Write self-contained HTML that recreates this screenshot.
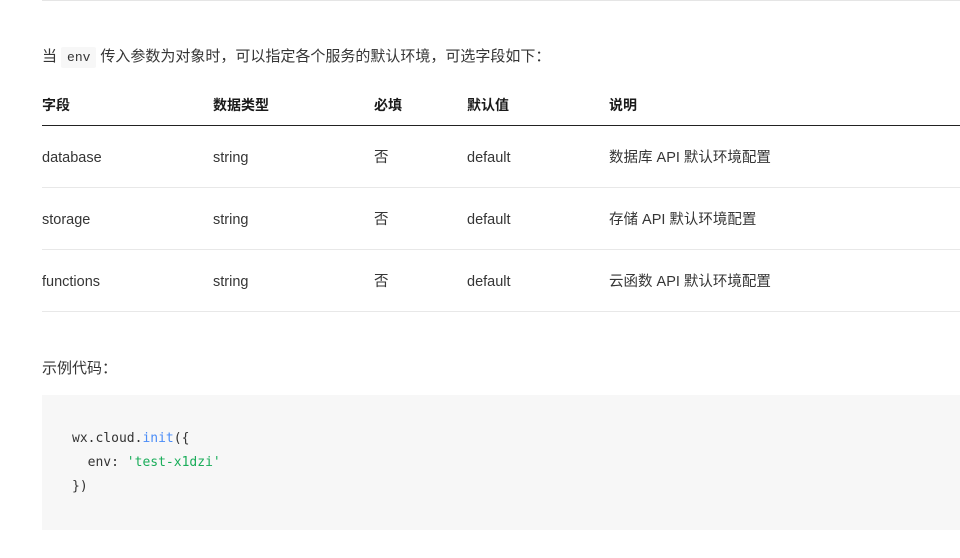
<!DOCTYPE html>
<html><head><meta charset="utf-8"><style>
body{margin:0;width:960px;height:558px;background:#fff;overflow:hidden;font-family:"Liberation Sans","Noto Sans CJK SC",sans-serif;font-size:15px;color:#353535;position:relative}
.a{position:absolute;white-space:nowrap}
.top{position:absolute;left:42px;right:0;top:0;height:1px;background:#e5e5e5}
code.i{background:#f7f7f7;font-family:"Liberation Mono",monospace;font-size:13px;padding:3px 6px;border-radius:2px;margin:0 4px}
.hr{position:absolute;left:42px;right:0;height:1px;background:#e8e8e8}
.th{font-weight:bold;font-size:14px;color:#1a1a1a}
.td{font-size:14.5px}
.l{margin-top:3px}
.code{position:absolute;left:42px;right:0;top:395px;height:135px;background:#f7f7f7}
pre{margin:0;position:absolute;left:30px;top:32px;font-family:"DejaVu Sans Mono","Liberation Mono",monospace;font-size:13px;line-height:24px;color:#333}
</style></head><body>
<div class="top"></div>
<div class="a" style="left:42px;top:45px">当<code class="i">env</code>传入参数为对象时，可以指定各个服务的默认环境，可选字段如下：</div>
<div class="a th" style="left:42px;top:95px">字段</div>
<div class="a th" style="left:213px;top:95px">数据类型</div>
<div class="a th" style="left:374px;top:95px">必填</div>
<div class="a th" style="left:467px;top:95px">默认值</div>
<div class="a th" style="left:609px;top:95px">说明</div>
<div class="hr" style="top:125px;background:#222"></div>
<div class="a td l" style="left:42px;top:147px">database</div><div class="a td l" style="left:213px;top:147px">string</div><div class="a td" style="left:374px;top:146px">否</div><div class="a td l" style="left:467px;top:147px">default</div><div class="a td" style="left:609px;top:146px">数据库 API 默认环境配置</div>
<div class="hr" style="top:187px"></div>
<div class="a td l" style="left:42px;top:209px">storage</div><div class="a td l" style="left:213px;top:209px">string</div><div class="a td" style="left:374px;top:208px">否</div><div class="a td l" style="left:467px;top:209px">default</div><div class="a td" style="left:609px;top:208px">存储 API 默认环境配置</div>
<div class="hr" style="top:249px"></div>
<div class="a td l" style="left:42px;top:271px">functions</div><div class="a td l" style="left:213px;top:271px">string</div><div class="a td" style="left:374px;top:270px">否</div><div class="a td l" style="left:467px;top:271px">default</div><div class="a td" style="left:609px;top:270px">云函数 API 默认环境配置</div>
<div class="hr" style="top:311px"></div>
<div class="a" style="left:42px;top:357px">示例代码：</div>
<div class="code"><pre>wx.cloud.<span style="color:#4a8cf7">init</span>({
  env: <span style="color:#1aad5a">'test-x1dzi'</span>
})</pre></div>
</body></html>
